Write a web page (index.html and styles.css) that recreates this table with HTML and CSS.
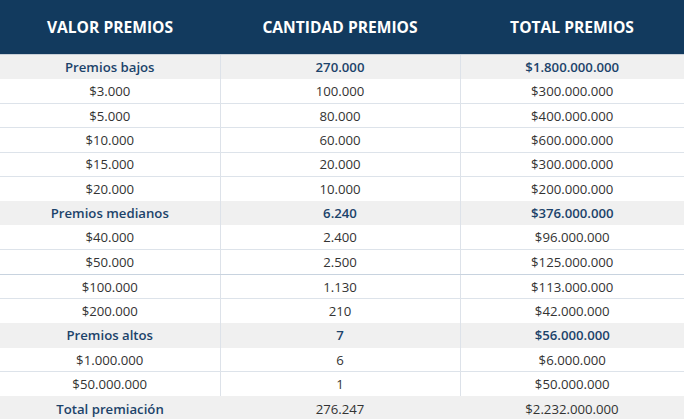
FILE: index.html
```html
<!DOCTYPE html>
<html lang="es">
<head>
<meta charset="utf-8">
<title>Premios</title>
<link rel="stylesheet" href="styles.css">
</head>
<body>
<table class="prizes">
  <colgroup>
    <col class="c1"><col class="c2"><col class="c3">
  </colgroup>
  <thead>
    <tr><th>VALOR PREMIOS</th><th>CANTIDAD PREMIOS</th><th>TOTAL PREMIOS</th></tr>
  </thead>
  <tbody>
    <tr class="group"><td>Premios bajos</td><td>270.000</td><td>$1.800.000.000</td></tr>
    <tr><td>$3.000</td><td>100.000</td><td>$300.000.000</td></tr>
    <tr><td>$5.000</td><td>80.000</td><td>$400.000.000</td></tr>
    <tr><td>$10.000</td><td>60.000</td><td>$600.000.000</td></tr>
    <tr><td>$15.000</td><td>20.000</td><td>$300.000.000</td></tr>
    <tr class="last"><td>$20.000</td><td>10.000</td><td>$200.000.000</td></tr>
    <tr class="group"><td>Premios medianos</td><td>6.240</td><td>$376.000.000</td></tr>
    <tr><td>$40.000</td><td>2.400</td><td>$96.000.000</td></tr>
    <tr class="strong-line"><td>$50.000</td><td>2.500</td><td>$125.000.000</td></tr>
    <tr><td>$100.000</td><td>1.130</td><td>$113.000.000</td></tr>
    <tr class="last"><td>$200.000</td><td>210</td><td>$42.000.000</td></tr>
    <tr class="group"><td>Premios altos</td><td>7</td><td>$56.000.000</td></tr>
    <tr><td>$1.000.000</td><td>6</td><td>$6.000.000</td></tr>
    <tr class="last"><td>$50.000.000</td><td>1</td><td>$50.000.000</td></tr>
    <tr class="total"><td>Total premiación</td><td>276.247</td><td>$2.232.000.000</td></tr>
  </tbody>
</table>
</body>
</html>
```
FILE: styles.css
```css
html, body {
  margin: 0;
  padding: 0;
  background: #ffffff;
}

body {
  font-family: "Open Sans", "Liberation Sans", sans-serif;
  color: #333333;
}

.prizes {
  width: 684px;
  border-collapse: collapse;
  table-layout: fixed;
}

.c1 { width: 220px; }
.c2 { width: 240px; }
.c3 { width: 224px; }

.prizes th {
  height: 54px;
  padding: 0;
  background: #123a5e;
  color: #ffffff;
  font-weight: 700;
  font-size: 15.6px;
  text-align: center;
  vertical-align: middle;
  border-bottom: 1px solid #c9d0d8;
}

.prizes td {
  height: 24.43px;
  padding: 0;
  box-sizing: border-box;
  font-size: 13.2px;
  font-weight: 400;
  text-align: center;
  vertical-align: middle;
  border-bottom: 1px solid #dde3ea;
  line-height: 16px;
}

.prizes td + td {
  border-left: 1px solid #dde2e9;
}

.prizes tr.last td {
  border-bottom: none;
}

.prizes tr.strong-line td {
  border-bottom-color: #c8d3df;
}

.prizes tr.group td {
  background: #f0f0f0;
  color: #1c436a;
  font-weight: 600;
  border-bottom: none;
}

.prizes tr.total td {
  background: #f0f0f0;
  border-bottom: none;
  border-left: none;
}

.prizes tr.total td:first-child {
  color: #1c436a;
  font-weight: 600;
}
```
